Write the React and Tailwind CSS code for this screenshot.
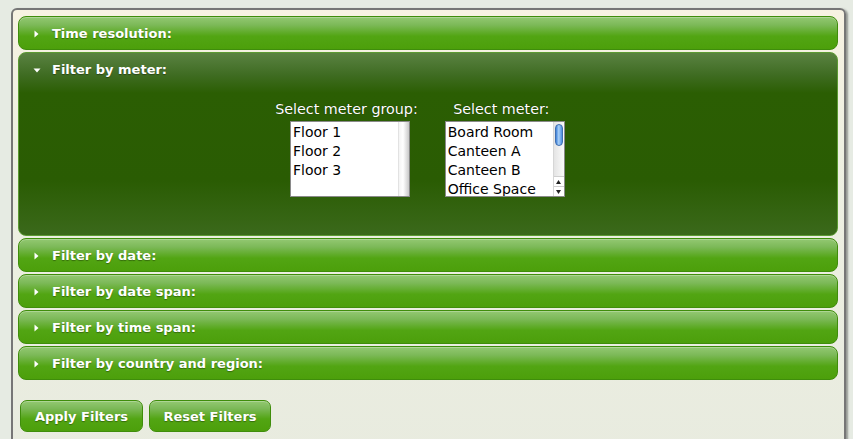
import React from "react";

const headerBg =
  "bg-[linear-gradient(to_bottom,#93c872_0%,#7cb958_25%,#52a513_60%,#4c9f0b_100%)]";

const Arrow = ({ open }) =>
  open ? (
    <svg width="8" height="5" viewBox="0 0 8 5" className="absolute left-[14px] top-[15px]">
      <path d="M0.5 0.5 L7.5 0.5 L4 4.5 Z" fill="#fff" />
    </svg>
  ) : (
    <svg width="5" height="8" viewBox="0 0 5 8" className="absolute left-[15px] top-[13px]">
      <path d="M0.5 0.5 L4.5 4 L0.5 7.5 Z" fill="#fff" />
    </svg>
  );

const Section = ({ title }) => (
  <div
    className={`relative h-[34px] rounded-[8px] border border-[#3f8d0b] ${headerBg} shadow-[inset_0_1px_0_rgba(255,255,255,0.25)]`}
  >
    <Arrow />
    <div className="pl-[33px] pt-[1px] leading-[32px] text-[13px] font-bold text-white [text-shadow:0_1px_1px_rgba(0,0,0,0.35)]">
      {title}
    </div>
  </div>
);

const Listbox = ({ items, thumb }) => (
  <div className="ml-[7px] flex h-[76px] w-[120px] border border-[#8a8a8a] bg-white">
    <div className="flex-1 pl-[2px] pt-[1px] overflow-hidden">
      {items.map((it) => (
        <div key={it} className="h-[19px] leading-[19px] text-[14px] text-black whitespace-nowrap">
          {it}
        </div>
      ))}
    </div>
    {thumb ? (
      <div className="flex w-[11px] flex-col border-l border-[#d6d6d6] bg-[linear-gradient(to_right,#e4e4e4,#fafafa)]">
        <div className="mx-auto mt-[2px] h-[22px] w-[8px] rounded-[4px] border border-[#3f6fb0] bg-[linear-gradient(to_right,#3d7fd8,#a9d0f7_45%,#4d8ee0)]" />
        <div className="flex-1" />
        <div className="flex h-[10px] items-center justify-center border-t border-[#cfcfcf] bg-white">
          <svg width="5" height="4" viewBox="0 0 5 4"><path d="M0 4 L2.5 0 L5 4 Z" fill="#222" /></svg>
        </div>
        <div className="flex h-[10px] items-center justify-center border-t border-[#cfcfcf] bg-white">
          <svg width="5" height="4" viewBox="0 0 5 4"><path d="M0 0 L5 0 L2.5 4 Z" fill="#222" /></svg>
        </div>
      </div>
    ) : (
      <div className="w-[11px] border-l border-[#e2e2e2] bg-[linear-gradient(to_right,#f4f4f4,#ffffff_40%,#c9c9c9)]" />
    )}
  </div>
);

const Button = ({ children, w }) => (
  <button
    className={`h-[32px] ${w} rounded-[7px] border border-[#3f8d0b] ${headerBg} pt-[1px] text-[13px] font-bold text-white [text-shadow:0_1px_1px_rgba(0,0,0,0.35)] shadow-[inset_0_1px_0_rgba(255,255,255,0.25)]`}
  >
    {children}
  </button>
);

export default function App() {
  return (
    <div className="h-[439px] overflow-hidden bg-[#e6ebe3] pt-[8px] pl-[11px] font-['DejaVu_Sans',sans-serif]">
      <div className="h-[460px] w-[835px] rounded-t-[6px] border-2 border-[#767676] bg-[linear-gradient(to_bottom,#f7f2e2_0%,#eef0e2_30%,#e8ebdf_100%)] px-[5px] pt-[6px] shadow-[2px_1px_2px_rgba(0,0,0,0.35)]">
        <div className="flex w-[820px] flex-col gap-[2px]">
          <Section title="Time resolution:" />

          <div className="relative h-[184px] rounded-[8px] border border-[#5c9a33] bg-[linear-gradient(to_bottom,#5a8242_0%,#3f6c22_12%,#2b5e03_22%,#2a5c03_70%,#3b691b_100%)]">
            <Arrow open />
            <div className="pl-[33px] leading-[34px] text-[13px] font-bold text-white [text-shadow:0_1px_1px_rgba(0,0,0,0.35)]">
              Filter by meter:
            </div>
            <div className="mt-[14px] flex justify-center gap-[20px] pr-[16px]">
              <div className="flex flex-col items-center">
                <div className="mb-[3px] leading-[17px] text-[14.3px] text-white [text-shadow:0_0_1px_rgba(0,0,0,0.7)]">
                  Select meter group:
                </div>
                <Listbox items={["Floor 1", "Floor 2", "Floor 3"]} />
              </div>
              <div className="flex flex-col items-center">
                <div className="mb-[3px] leading-[17px] text-[14.3px] text-white [text-shadow:0_0_1px_rgba(0,0,0,0.7)]">
                  Select meter:
                </div>
                <Listbox items={["Board Room", "Canteen A", "Canteen B", "Office Space"]} thumb />
              </div>
            </div>
          </div>

          <Section title="Filter by date:" />
          <Section title="Filter by date span:" />
          <Section title="Filter by time span:" />
          <Section title="Filter by country and region:" />
        </div>

        <div className="mt-[20px] flex gap-[6px] pl-[2px]">
          <Button w="w-[123px]">Apply Filters</Button>
          <Button w="w-[122px]">Reset Filters</Button>
        </div>
      </div>
    </div>
  );
}
